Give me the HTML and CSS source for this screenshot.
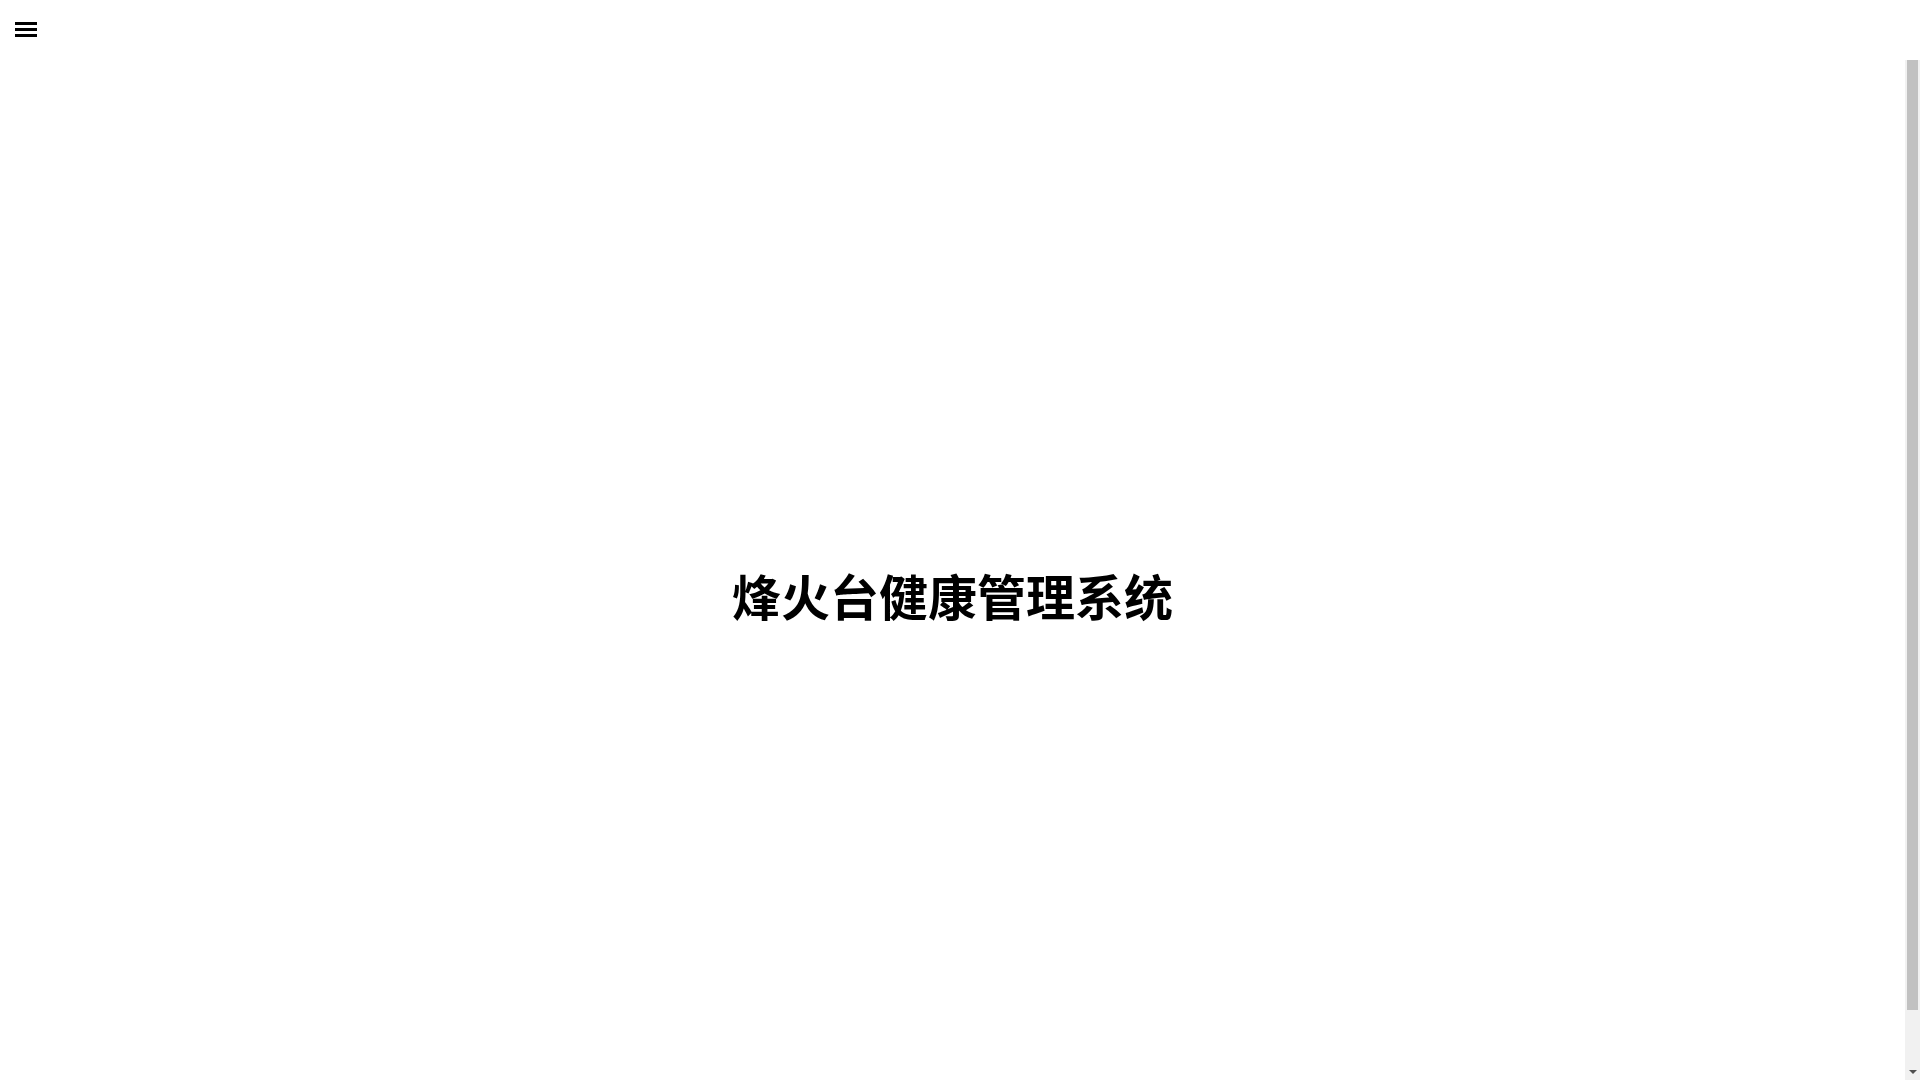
FILE: index.html
```html
<!DOCTYPE html>
<html lang="zh-CN">
<head>
<meta charset="utf-8">
<title>烽火台健康管理系统</title>
<link rel="stylesheet" href="styles.css">
</head>
<body>
<header class="topbar">
  <button class="menu-btn" aria-label="menu">
    <span class="bar"></span>
    <span class="bar"></span>
    <span class="bar"></span>
  </button>
</header>
<div class="body-row">
  <div class="content">
    <main class="hero">
      <h1 class="title">烽火台健康管理系统</h1>
    </main>
  </div>
  <div class="scrollbar" aria-hidden="true">
    <div class="thumb"></div>
    <div class="track-rest"></div>
    <div class="arrow-down"></div>
  </div>
</div>
</body>
</html>
```

FILE: styles.css
```css
html, body {
  margin: 0;
  padding: 0;
  height: 100%;
  overflow: hidden;
  background: #fff;
  font-family: "Noto Sans CJK SC", "Noto Sans", sans-serif;
}
body {
  display: flex;
  flex-direction: column;
}
.topbar {
  height: 60px;
  flex: 0 0 60px;
  background: #fff;
  display: flex;
  align-items: flex-start;
}
.menu-btn {
  margin: 22px 0 0 15px;
  padding: 0;
  border: 0;
  background: transparent;
  width: 22px;
  display: flex;
  flex-direction: column;
  gap: 3px;
  cursor: pointer;
}
.bar {
  display: block;
  width: 22px;
  height: 3px;
  background: #000;
}
.body-row {
  flex: 1;
  display: flex;
  min-height: 0;
}
.content {
  flex: 1;
  overflow: hidden;
}
.hero {
  height: 1070px;
  display: flex;
  align-items: center;
  justify-content: center;
}
.title {
  margin: 0;
  font-size: 49px;
  font-weight: 700;
  color: #000;
  line-height: 1.2;
}
.scrollbar {
  width: 15px;
  flex: 0 0 15px;
  background: #f1f1f1;
  display: flex;
  flex-direction: column;
  align-items: center;
}
.thumb {
  width: 11px;
  height: 950px;
  background: #c1c1c1;
  flex: 0 0 950px;
}
.track-rest {
  flex: 1;
}
.arrow-down {
  width: 0;
  height: 0;
  border-left: 4px solid transparent;
  border-right: 4px solid transparent;
  border-top: 4px solid #505050;
  margin: 0 0 6px 0;
}
```
